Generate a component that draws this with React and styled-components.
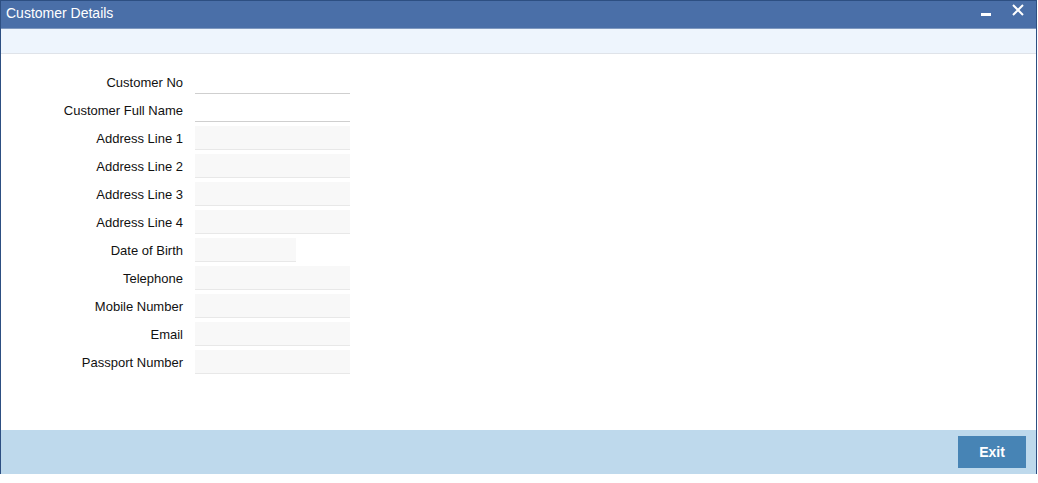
import React from 'react';
import styled, { createGlobalStyle } from 'styled-components';

const GlobalStyle = createGlobalStyle`
  html, body {
    margin: 0;
    padding: 0;
    background: #ffffff;
  }
  body {
    font-family: "Liberation Sans", Arial, sans-serif;
  }
`;

const fields = [
  { label: 'Customer No', plain: true },
  { label: 'Customer Full Name', plain: true },
  { label: 'Address Line 1' },
  { label: 'Address Line 2' },
  { label: 'Address Line 3' },
  { label: 'Address Line 4' },
  { label: 'Date of Birth', short: true },
  { label: 'Telephone' },
  { label: 'Mobile Number' },
  { label: 'Email' },
  { label: 'Passport Number' },
];

const App = () => {
  return (
    <>
      <GlobalStyle />
      <Window>
        <TitleBar>
          <Title>Customer Details</Title>
          <Controls>
            <IconBtn aria-label="minimize" $top={12}>
              <svg width="10" height="3" viewBox="0 0 10 3">
                <rect x="0" y="0" width="10" height="3" fill="#fff" />
              </svg>
            </IconBtn>
            <IconBtn aria-label="close" $top={3}>
              <svg width="12" height="12" viewBox="0 0 12 12">
                <path d="M1 1 L11 11 M11 1 L1 11" stroke="#fff" strokeWidth="2" />
              </svg>
            </IconBtn>
          </Controls>
        </TitleBar>
        <Strip />
        <Body>
          <Form>
            {fields.map((f) => (
              <Row key={f.label}>
                <Label>{f.label}</Label>
                <Input $plain={f.plain} $short={f.short} />
              </Row>
            ))}
          </Form>
        </Body>
        <Footer>
          <ExitButton>Exit</ExitButton>
        </Footer>
      </Window>
    </>
  );
};

export default App;

const Window = styled.div`
  width: 1037px;
  height: 474px;
  box-sizing: border-box;
  border: 1px solid #2d4f82;
  border-bottom: none;
  display: flex;
  flex-direction: column;
  background: #fff;
`;

const TitleBar = styled.div`
  height: 28px;
  box-sizing: border-box;
  background: #4a6fa8;
  border-bottom: 1px solid #7e98bf;
  display: flex;
  align-items: center;
  justify-content: space-between;
  padding: 0 0 0 5px;
`;

const Title = styled.span`
  color: #fff;
  font-size: 14px;
  margin-top: -3px;
`;

const Controls = styled.div`
  align-self: stretch;
  display: flex;
  align-items: flex-start;
  gap: 21px;
  margin-right: 12px;
`;

const IconBtn = styled.span`
  display: flex;
  margin-top: ${(p) => p.$top}px;
`;

const Strip = styled.div`
  height: 24px;
  background: #eef5fd;
  border-bottom: 1px solid #dfe3e9;
`;

const Body = styled.div`
  flex: 1;
  padding-top: 14px;
`;

const Form = styled.div`
  display: flex;
  flex-direction: column;
`;

const Row = styled.div`
  height: 28px;
  display: flex;
  align-items: center;
`;

const Label = styled.label`
  width: 182px;
  text-align: right;
  font-size: 13px;
  color: #111;
  margin-right: 12px;
`;

const Input = styled.div`
  width: ${(p) => (p.$short ? '101px' : '155px')};
  height: 24px;
  box-sizing: border-box;
  background: ${(p) => (p.$plain ? '#ffffff' : '#f8f8f8')};
  border-bottom: 1px solid ${(p) => (p.$plain ? '#cfcfcf' : '#e8e8e8')};
`;

const Footer = styled.div`
  height: 44px;
  background: #bed9ec;
  display: flex;
  align-items: center;
  justify-content: flex-end;
  padding-right: 10px;
`;

const ExitButton = styled.button`
  width: 68px;
  height: 32px;
  border: none;
  background: #4784b5;
  color: #fff;
  font-family: "Liberation Sans", Arial, sans-serif;
  font-size: 14px;
  font-weight: bold;
  cursor: pointer;
`;
